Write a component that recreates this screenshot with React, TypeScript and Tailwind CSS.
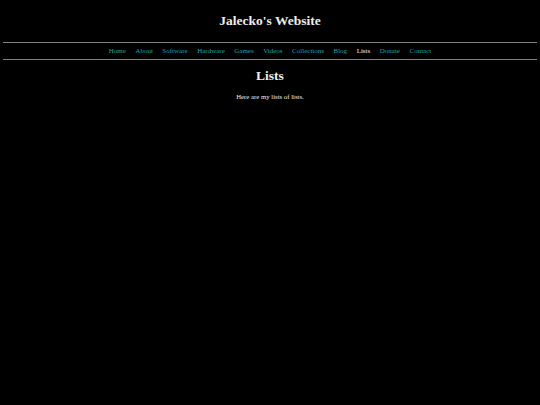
const links = ['Home', 'About', 'Software', 'Hardware', 'Games', 'Videos', 'Collections', 'Blog', 'Lists', 'Donate', 'Contact'];

export default function App() {
  return (
    <div className="min-h-[405px] bg-black px-[3px] text-[#eeeeee] font-['Liberation_Serif',serif]">
      <h1 className="pt-[13px] pb-[13px] text-center text-[13.5px] font-bold leading-[16px]">Jalecko's Website</h1>
      <div className="h-px bg-[#808080]" />
      <nav className="flex justify-center gap-[9.5px] py-[4px] text-[7px] leading-[8px]">
        {links.map((l) => (
          <a key={l} className={l === 'Lists' ? 'text-[#eeeeee]' : 'text-[#1fa5a5]'}>
            {l}
          </a>
        ))}
      </nav>
      <div className="h-px bg-[#808080]" />
      <h2 className="pt-[8px] text-center text-[13.5px] font-bold leading-[16px]">Lists</h2>
      <p className="pt-[9px] text-center text-[6.75px] leading-[8px]">Here are my lists of lists.</p>
    </div>
  );
}
